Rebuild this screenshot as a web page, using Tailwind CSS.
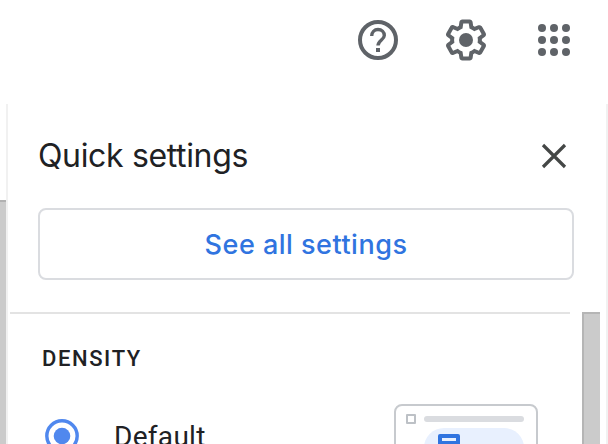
<!DOCTYPE html>
<html lang="en">
<head>
  <meta charset="UTF-8" />
  <meta name="viewport" content="width=device-width, initial-scale=1.0"/>
  <title>Quick settings</title>
  <script src="https://cdn.jsdelivr.net/npm/@tailwindcss/browser@4"></script>
</head>
<body class="h-[444px] w-[608px] overflow-hidden bg-white font-['Roboto',sans-serif] text-[#202124]">
  <!-- Top bar -->
  <header class="flex h-[104px] items-start justify-end gap-10 pt-4 pr-[30px] text-[#5f6368]">
    <button aria-label="Support">
      <svg class="size-12" viewBox="0 0 24 24" fill="none" stroke="currentColor"><circle cx="12" cy="12" r="9" stroke-width="2"/><path stroke-width="1.7" d="M8.85 10C8.85 8.1 10.2 6.75 12 6.75S15.15 8.1 15.15 9.8C15.15 11.9 12 12.2 12 14.8"/><path stroke-width="2" d="M12 16v2"/></svg>
    </button>
    <button aria-label="Settings">
      <svg class="size-12" viewBox="0 0 24 24" fill="currentColor"><path d="M13.85 22.25h-3.7c-.74 0-1.36-.54-1.45-1.27l-.27-1.89c-.27-.14-.53-.29-.79-.46l-1.8.72c-.7.26-1.47-.03-1.81-.65L2.2 15.53c-.35-.66-.2-1.44.36-1.88l1.53-1.19c-.01-.15-.02-.3-.02-.46 0-.15.01-.31.02-.46l-1.52-1.19c-.59-.45-.74-1.26-.37-1.88l1.85-3.19c.34-.62 1.11-.9 1.79-.63l1.81.73c.26-.17.52-.32.78-.46l.27-1.91c.09-.7.71-1.25 1.44-1.25h3.7c.74 0 1.36.54 1.45 1.27l.27 1.89c.27.14.53.29.79.46l1.8-.72c.71-.26 1.48.03 1.82.65l1.84 3.18c.36.66.2 1.44-.36 1.88l-1.52 1.19c.01.15.02.3.02.46s-.01.31-.02.46l1.52 1.19c.56.45.72 1.23.37 1.86l-1.86 3.22c-.34.62-1.11.9-1.8.63l-1.8-.72c-.26.17-.52.32-.78.46l-.27 1.91c-.1.68-.72 1.22-1.46 1.22zm-3.23-2h2.76l.37-2.55.53-.22c.44-.18.88-.44 1.34-.78l.45-.34 2.38.96 1.38-2.4-2.03-1.58.07-.56c.03-.26.06-.51.06-.78s-.03-.53-.06-.78l-.07-.56 2.03-1.58-1.39-2.4-2.39.96-.45-.35c-.42-.32-.87-.58-1.33-.77l-.52-.22-.37-2.55h-2.76l-.37 2.55-.53.21c-.44.19-.88.44-1.34.79l-.45.33-2.38-.95-1.39 2.39 2.03 1.58-.07.56a7 7 0 0 0-.06.79c0 .26.02.53.06.78l.07.56-2.03 1.58 1.38 2.4 2.39-.96.45.35c.43.33.86.58 1.33.77l.53.22.38 2.55z"/><circle cx="12" cy="12" r="3.5"/></svg>
    </button>
    <button aria-label="Google apps">
      <svg class="size-12" viewBox="0 0 24 24" fill="currentColor">
        <circle cx="6" cy="6" r="2"/><circle cx="12" cy="6" r="2"/><circle cx="18" cy="6" r="2"/>
        <circle cx="6" cy="12" r="2"/><circle cx="12" cy="12" r="2"/><circle cx="18" cy="12" r="2"/>
        <circle cx="6" cy="18" r="2"/><circle cx="12" cy="18" r="2"/><circle cx="18" cy="18" r="2"/>
      </svg>
    </button>
  </header>

  <div class="flex h-[340px] overflow-hidden">
    <!-- Mail list edge -->
    <div class="mt-24 w-1.5 shrink-0 border-t-2 border-[#b1b1b1] bg-[#cbcbcb]"></div>

    <!-- Quick settings panel -->
    <aside class="flex w-[602px] flex-col border-x-2 border-[#f1f1f1]">
      <div class="flex h-[104px] shrink-0 items-center justify-between pr-7 pl-[30px]">
        <h2 class="font-['Inter',sans-serif] text-[32px] leading-10 tracking-[-0.35px] whitespace-nowrap">Quick settings</h2>
        <button aria-label="Close" class="text-[#444746]">
          <svg class="size-12" viewBox="0 0 48 48" fill="none" stroke="currentColor" stroke-width="3.2"><path d="M13 13l22 22M35 13L13 35"/></svg>
        </button>
      </div>
      <button class="ml-[30px] h-[72px] w-[536px] shrink-0 rounded-lg border-2 border-[#dadce0] pt-0.5 font-['Inter',sans-serif] text-[27px] font-medium tracking-[0.5px] text-[#3074e0]">See all settings</button>

      <div class="mt-8 flex grow pl-0.5">
        <div class="w-[560px] border-t-2 border-[#e3e3e3] pl-8">
          <h3 class="mt-[33px] text-[22px] leading-6 font-medium tracking-[1.6px]">DENSITY</h3>
          <div class="mt-[33px] flex items-start">
            <svg class="mt-3.5 ml-[2px] size-9 shrink-0" viewBox="0 0 36 36" fill="none"><circle cx="18" cy="18" r="15.2" stroke="#5088ee" stroke-width="3.4"/><circle cx="18" cy="18" r="8.3" fill="#5088ee"/></svg>
            <span class="mt-[17px] ml-[34px] w-[280px] text-[28px] leading-8 tracking-[0.3px]">Default</span>
            <!-- Density preview -->
            <div class="h-24 w-36 shrink-0 rounded-lg border-2 border-[#c7cace] pt-2 pl-2.5">
              <div class="flex items-center gap-2">
                <div class="size-2.5 rounded-[1px] border-2 border-[#bdc1c6]"></div>
                <div class="h-1.5 w-[100px] rounded-full bg-[#dadce0]"></div>
              </div>
              <div class="mt-1 ml-[18px] h-10 w-[100px] rounded-[20px] bg-[#e8f0fe] pt-1.5 pl-3.5">
                <div class="h-5 w-[22px] rounded-[2px] bg-[#3074e0] px-1 pt-1">
                  <div class="h-[3px] bg-[#e8f0fe]"></div>
                </div>
              </div>
            </div>
          </div>
        </div>
        <!-- Scrollbar -->
        <div class="ml-3 w-[18px] border-t-2 border-l-2 border-[#b5b5b5] bg-[#cbcbcb]"></div>
      </div>
    </aside>
  </div>
</body>
</html>
